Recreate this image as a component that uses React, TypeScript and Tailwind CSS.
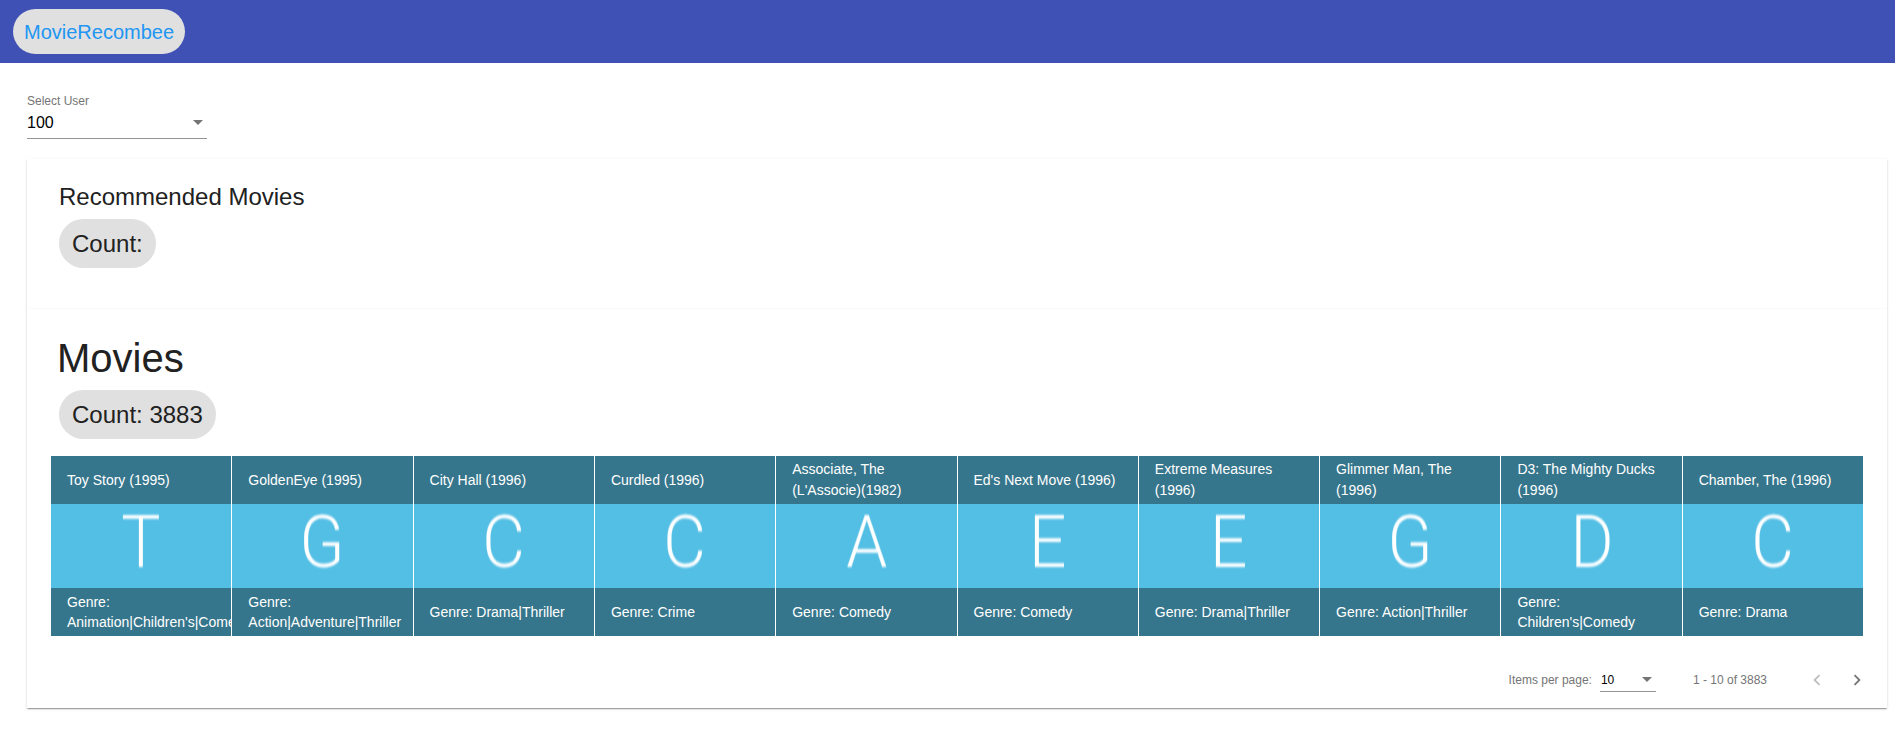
import React from "react";

const movies = [
  { title: "Toy Story (1995)", letter: "T", genre: "Animation|Children's|Comedy" },
  { title: "GoldenEye (1995)", letter: "G", genre: "Action|Adventure|Thriller" },
  { title: "City Hall (1996)", letter: "C", genre: "Drama|Thriller" },
  { title: "Curdled (1996)", letter: "C", genre: "Crime" },
  { title: "Associate, The (L'Associe)(1982)", letter: "A", genre: "Comedy" },
  { title: "Ed's Next Move (1996)", letter: "E", genre: "Comedy" },
  { title: "Extreme Measures (1996)", letter: "E", genre: "Drama|Thriller" },
  { title: "Glimmer Man, The (1996)", letter: "G", genre: "Action|Thriller" },
  { title: "D3: The Mighty Ducks (1996)", letter: "D", genre: "Children's|Comedy" },
  { title: "Chamber, The (1996)", letter: "C", genre: "Drama" },
];

const cardShadow =
  "shadow-[0_2px_1px_-1px_rgba(0,0,0,0.2),0_1px_1px_0_rgba(0,0,0,0.14),0_1px_3px_0_rgba(0,0,0,0.12)]";

function Chevron({ dir, color }: { dir: "left" | "right"; color: string }) {
  return (
    <svg width="22" height="22" viewBox="0 0 24 24" fill={color}>
      {dir === "left" ? (
        <path d="M15.41 7.41L14 6l-6 6 6 6 1.41-1.41L10.83 12z" />
      ) : (
        <path d="M10 6L8.59 7.41 13.17 12l-4.58 4.59L10 18l6-6z" />
      )}
    </svg>
  );
}

export default function App() {
  return (
    <div className="min-h-screen bg-white font-['Liberation_Sans',Arial,sans-serif] text-[#212121]">
      {/* Toolbar */}
      <div className="flex h-[63px] items-center bg-[#3f51b5] px-[13px]">
        <div className="flex h-[45px] items-center rounded-full bg-[#e0e0e0] px-[11px] text-[20px] text-[#2196f3]">
          MovieRecombee
        </div>
      </div>

      {/* Select user */}
      <div className="pl-[27px] pt-[31px]">
        <div className="text-[12px] leading-[14px] text-[#757575]">Select User</div>
        <div className="mt-[3px] flex h-[28px] w-[180px] items-center justify-between border-b border-[#949494] pb-[4px]">
          <span className="text-[16px] leading-[24px] text-black">100</span>
          <span className="mr-[4px] h-0 w-0 border-x-[5px] border-t-[5px] border-x-transparent border-t-[#757575]" />
        </div>
      </div>

      {/* Cards */}
      <div className="ml-[27px] mt-[20px] w-[1860px]">
        <div className={`h-[150px] bg-white pl-[32px] pt-[22px] ${cardShadow}`}>
          <div className="text-[24px] leading-[32px]">Recommended Movies</div>
          <div className="mt-[6px] inline-flex h-[49px] items-center rounded-full bg-[#e0e0e0] px-[13px] text-[24px]">
            Count:
          </div>
        </div>

        <div className={`bg-white ${cardShadow}`}>
          <div className="px-[24px] pt-[25px]">
            <div className="pl-[8px]">
              <div className="-ml-[2px] text-[40px] leading-[48px]">Movies</div>
              <div className="mt-[8px] inline-flex h-[49px] items-center rounded-full bg-[#e0e0e0] px-[13px] text-[24px]">
                Count: 3883
              </div>
            </div>

            <div className="mt-[17px] grid grid-cols-10 gap-x-px bg-white">
              {movies.map((m, i) => (
                <div key={i} className="flex flex-col overflow-hidden text-[14px] text-white">
                  <div className="flex h-[48px] items-center bg-[#36768c] px-[16px] leading-[21px]">
                    <span>{m.title}</span>
                  </div>
                  <div className="flex h-[84px] items-center justify-center bg-[#53bfe5] pb-[8px]">
                    <span className="inline-block scale-x-[0.9] font-['Roboto',sans-serif] text-[73px] font-light leading-none text-white blur-[0.8px]">
                      {m.letter}
                    </span>
                  </div>
                  <div className="flex h-[48px] items-center bg-[#36768c] px-[16px] leading-[20px]">
                    <span>
                      Genre: <span className="whitespace-nowrap">{m.genre}</span>
                    </span>
                  </div>
                </div>
              ))}
            </div>
          </div>

          {/* Paginator */}
          <div className="mt-[16px] flex h-[56px] items-center justify-end pr-[10px] text-[12px]">
            <span className="text-[#757575]">Items per page:</span>
            <div className="ml-[8px] flex h-[24px] w-[56px] items-center justify-between border-b border-[#949494] pl-[1px]">
              <span className="text-black">10</span>
              <span className="mr-[4px] h-0 w-0 border-x-[5px] border-t-[5px] border-x-transparent border-t-[#757575]" />
            </div>
            <span className="ml-[37px] text-[#757575]">1 - 10 of 3883</span>
            <div className="ml-[30px] flex h-[40px] w-[40px] items-center justify-center">
              <Chevron dir="left" color="#bdbdbd" />
            </div>
            <div className="flex h-[40px] w-[40px] items-center justify-center">
              <Chevron dir="right" color="#757575" />
            </div>
          </div>
        </div>
      </div>
    </div>
  );
}
